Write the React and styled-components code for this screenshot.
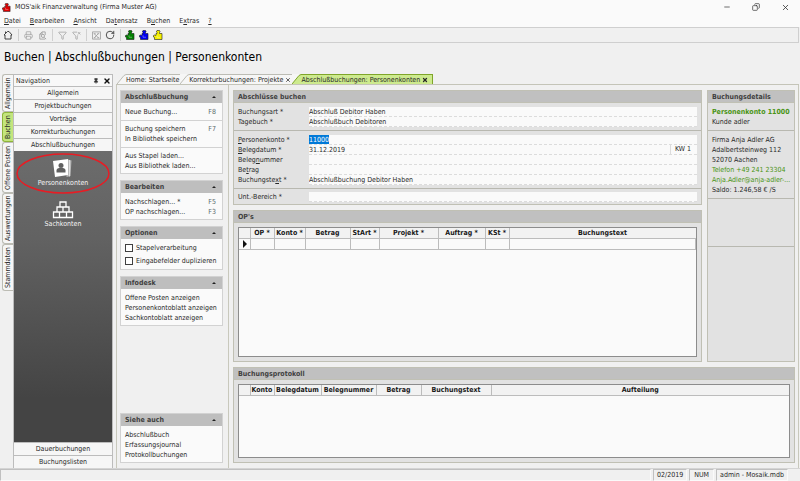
import React from "react";
import styled, { createGlobalStyle } from "styled-components";
import {
  Copy,
  Filter,
  FilterX,
  Minus,
  Pin,
  Printer,
  RotateCw,
  X,
} from "lucide-react";

const GlobalStyle = createGlobalStyle`
  * {
    box-sizing: border-box;
  }
  body {
    margin: 0;
    background: #f0f0f0;
    color: #282828;
    font: 7px/10px "DejaVu Sans Condensed", "DejaVu Sans", sans-serif;
  }
  button, input {
    margin: 0;
    padding: 0;
    border: 0;
    background: none;
    color: inherit;
    font: inherit;
  }
  a {
    color: inherit;
    text-decoration: none;
  }
  svg {
    display: block;
    flex: none;
  }
`;

const Window = styled.div`
  display: flex;
  flex-direction: column;
  min-height: 100vh;
`;

const TitleBar = styled.header`
  display: flex;
  align-items: center;
  gap: 4px;
  height: 14px;
  padding: 0 10px 0 2px;
  background: #fafafa;
`;

const WindowTitle = styled.span`
  flex: 1;
`;

const WindowButtons = styled.div`
  display: flex;
  gap: 21px;
`;

const MenuBar = styled.nav`
  display: flex;
  align-items: center;
  gap: 9px;
  height: 13px;
  padding: 0 4px;
  background: #fafafa;
`;

const ToolBar = styled.div`
  display: flex;
  align-items: center;
  gap: 4px;
  height: 16px;
  padding: 0 3px;
  border: 1px solid #cfcfcf;
  border-left: 0;
  margin-right: 1px;
`;

const ToolButton = styled.button`
  display: flex;
  align-items: center;
  justify-content: center;
  width: 10px;
  height: 12px;
  color: ${(p) => (p.disabled ? "#a0a0a0" : "#303030")};
`;

const ToolSeparator = styled.span`
  width: 1px;
  height: 12px;
  margin-left: 1px;
  background: #d0d0d0;
`;

const Heading = styled.h1`
  margin: 0;
  padding: 6px 4px 9px;
  font-size: 12px;
  line-height: 16px;
  font-weight: normal;
  color: #000;
`;

const Workspace = styled.div`
  display: flex;
  flex: 1;
  padding-right: 1px;
`;

const SideTabs = styled.div`
  display: flex;
  flex-direction: column;
  width: 13px;
  padding-left: 2px;
`;

const SideTab = styled.button`
  writing-mode: vertical-rl;
  transform: rotate(180deg);
  width: 11px;
  height: ${(p) => p.$length}px;
  border: 1px solid ${(p) => (p.$active ? "#8fb53a" : "#bcbcb4")};
  border-left: 0;
  border-radius: 0 3px 3px 0;
  background: ${(p) => (p.$active ? "#c3e57c" : "#f6f6f6")};
  line-height: 9px;
  text-align: center;
  white-space: nowrap;
`;

const Navigation = styled.aside`
  display: flex;
  flex-direction: column;
  width: 100px;
  border: 1px solid #bcbcbc;
  border-bottom: 0;
`;

const NavTitle = styled.div`
  display: flex;
  align-items: center;
  gap: 4px;
  height: 11px;
  padding: 0 1px 0 2px;
  background: #f8f8f8;

  span {
    flex: 1;
  }
`;

const NavGroups = styled.div`
  display: grid;
  grid-auto-rows: 13px;
`;

const NavGroup = styled.button`
  border-top: 1px solid #bcbcbc;
  background: #f6f6f6;
  text-align: center;
`;

const NavBody = styled.div`
  display: flex;
  flex-direction: column;
  flex: 1;
  gap: 2px;
  padding-top: 2px;
  background: linear-gradient(#6c6c6c, #626262 30%, #444 85%);
`;

const NavItem = styled.button`
  position: relative;
  display: flex;
  flex-direction: column;
  align-items: center;
  justify-content: center;
  height: 40px;
  color: #f4f4f4;
`;

const Marker = styled.svg`
  position: absolute;
  top: 0;
  left: 2px;
`;

const Documents = styled.div`
  display: flex;
  flex-direction: column;
  flex: 1;
  min-width: 0;
  margin-left: 3px;
`;

const TabStrip = styled.div`
  display: flex;
  align-items: stretch;
  height: 11px;
  padding-left: 1px;
  border-bottom: 1px solid #c4c4b8;
`;

const TabButton = styled.button`
  display: flex;
  align-items: center;
  gap: 2px;
  padding-right: ${(p) => (p.$active ? 4 : 1)}px;
  border-top: 1px solid ${(p) => (p.$active ? "#7fa52a" : "#bcbcb4")};
  border-right: ${(p) => (p.$active ? "1px solid #7fa52a" : "0")};
  background: ${(p) => (p.$active ? "#cdea8e" : "#f6f6f6")};
  white-space: nowrap;
`;

const Columns = styled.div`
  display: flex;
  flex: 1;
  border: 1px solid #c8c8bc;
  border-top: 0;
  border-bottom: 0;
`;

const TaskPane = styled.aside`
  display: flex;
  flex-direction: column;
  gap: 6px;
  width: 112px;
  padding: 5px 5px 5px 3px;
  border-right: 1px solid #c8c8bc;
`;

const Card = styled.section`
  margin-top: ${(p) => (p.$bottom ? "auto" : "0")};
  border: 1px solid #d2d2d2;
  background: #fafafa;
`;

const CardTitle = styled.h2`
  display: flex;
  align-items: center;
  justify-content: space-between;
  height: 12px;
  margin: 0 0 1px;
  padding: 0 6px 0 4px;
  background: #bebebe;
  color: #404040;
  font-size: 7px;
`;

const CardSection = styled.div`
  padding: ${(p) => (p.$tight ? 1 : 3)}px 4px 3px;
  border-bottom: 1px solid #d2d2d2;

  &:last-child {
    padding-bottom: 2px;
    border-bottom: 0;
  }
`;

const TaskLink = styled.a`
  display: flex;
  justify-content: space-between;
  padding-right: 2px;
  white-space: nowrap;

  kbd {
    font: inherit;
    color: #5c6c6c;
  }
`;

const CheckLabel = styled.label`
  display: flex;
  align-items: center;
  gap: 3px;
  height: 13px;
  white-space: nowrap;
`;

const CheckBox = styled.input`
  appearance: none;
  width: 8px;
  height: 8px;
  border: 1px solid #404040;
  background: #fff;
`;

const Main = styled.main`
  display: grid;
  grid-template-columns: minmax(0, 1fr) 88px;
  grid-template-rows: auto minmax(0, 1fr) 96px;
  gap: 5px;
  flex: 1;
  min-width: 0;
  padding: 5px 3px 5px 4px;
`;

const Panel = styled.section`
  display: flex;
  flex-direction: column;
  grid-column: ${(p) => p.$column || "auto"};
  grid-row: ${(p) => p.$row || "auto"};
  min-width: 0;
  border: 1px solid #c0c0b4;
  background: #e2e2e2;
`;

const PanelTitle = styled.h2`
  height: 12px;
  margin: 0;
  padding: 1px 4px;
  border-bottom: 1px solid #c0c0b4;
  background: #c0c0c0;
  color: #404040;
  font-size: 7px;
`;

const FieldGroup = styled.div`
  padding: 4px 4px 3px;
  border-top: ${(p) => (p.$ruled ? "1px solid #b8b8b0" : "0")};

  &:last-child {
    padding: 3px 4px 2px;
  }
`;

const FieldRow = styled.div`
  display: flex;
  height: 10px;

  label {
    width: 71px;
  }
`;

const FieldBox = styled.div`
  display: flex;
  flex: 1;
  border-bottom: 1px dashed #dcdcdc;
  background: #fafafa;
`;

const FieldInput = styled.input`
  flex: ${(p) => (p.$marked ? "none" : "1")};
  width: ${(p) => (p.$marked ? "20px" : "auto")};
  min-width: 0;
  height: 9px;
  background: ${(p) => (p.$marked ? "#0078d7" : "transparent")};
  color: ${(p) => (p.$marked ? "#fff" : "inherit")};
`;

const Week = styled.span`
  padding: 0 6px 0 4px;
  border-left: 1px solid #dcdcdc;
  line-height: 9px;
`;

const Details = styled.div`
  padding: 4px 4px 3px;
  border-bottom: 1px solid #b8b8b0;
`;

const DetailRow = styled.div`
  height: 10px;
  white-space: nowrap;
`;

const DetailTitle = styled(DetailRow)`
  color: #4a9414;
  font-weight: bold;
`;

const DetailLink = styled.a`
  color: #4a9414;
`;

const DetailGap = styled.div`
  height: 48px;
  border-bottom: 1px solid #b8b8b0;
`;

const TableFrame = styled.div`
  flex: 1;
  margin: 4px;
  border: 1px solid #8c8c8c;
  background: #fafafa;
`;

const Table = styled.table`
  width: 100%;
  table-layout: fixed;
  border-collapse: collapse;

  th,
  td {
    height: 11px;
    padding: 0;
    border-right: 1px solid #bcbcbc;
    border-bottom: 1px solid #bcbcbc;
    white-space: nowrap;
  }
  th {
    height: 10px;
    background: #f2f2f2;
    color: #181818;
  }
  th:last-child {
    border-right: 0;
  }
`;

const Column = styled.col`
  width: ${(p) => (p.$width ? p.$width + "px" : "auto")};
`;

const StatusBar = styled.footer`
  display: flex;
  gap: 2px;
  height: 13px;
  padding-right: 12px;
  border-top: 1px solid #d4d4d4;
`;

const StatusCell = styled.div`
  flex: ${(p) => (p.$grow ? 1 : "none")};
  padding: 0 ${(p) => p.$pad || 3}px;
  border: 1px solid #fafafa;
  border-top-color: #c0c0c0;
  border-left-color: #c0c0c0;
  line-height: 11px;
`;

function PuzzleIcon({ color, size = 10 }) {
  return (
    <svg width={size} height={size} viewBox="0 0 20 20">
      <path
        d="M8 7V5L7 4V2L8 1h5l1 1v2l-1 1v2h5v12H3v-4l-2-1v-3l2-1 3 1V7z"
        fill={color}
        stroke="#1c1c1c"
        strokeWidth="1.2"
      />
      <path d="M8 10.500v4h6" fill="none" stroke="#fff" strokeWidth="1.200" opacity="0.600" />
    </svg>
  );
}

function HomeIcon() {
  return (
    <svg width="10" height="10" viewBox="0 0 20 20" fill="none" stroke="#303030" strokeWidth="1.800">
      <path d="M2 10 9 3h3l6 7h-2v8H4v-8zM5 6V3" />
    </svg>
  );
}

function PreviewIcon() {
  return (
    <svg width="9" height="9" viewBox="0 0 20 20" fill="none" stroke="currentColor" strokeWidth="2">
      <path d="M16 18H4V7l5-5h7v7M4 7h5V2" />
      <circle cx="11" cy="11" r="3.500" />
      <path d="m14 14 4 4" />
    </svg>
  );
}

function ExcelIcon() {
  return (
    <svg width="9" height="9" viewBox="0 0 20 20" fill="none" stroke="currentColor" strokeWidth="2">
      <path d="M1 2h18v16H1zM5 6l9 9M14 6l-9 9M4 6h4M12 6h4M4 15h4M12 15h4" />
    </svg>
  );
}

function ContactsIcon() {
  return (
    <svg width="22" height="20" viewBox="0 0 44 40">
      <path d="m32 3 7 2-2 31-8 2z" fill="#b8b8b8" />
      <path d="M35 4v33" stroke="#eee" strokeWidth="1.500" />
      <path d="M2 6 32 2v32L6 38z" fill="#fff" />
      <circle cx="18" cy="15" r="5" fill="#606060" />
      <path d="M9 29v-4c0-4 3-5 9-5s9 1 9 5v4z" fill="#606060" />
    </svg>
  );
}

function BricksIcon() {
  return (
    <svg width="22" height="18" viewBox="0 0 44 36" fill="none" stroke="#fff" strokeWidth="2.600">
      <path d="M16 2h12v10H16zM10 12h12v10H10zM22 12h12v10H22zM3 22h12v11H3zM15 22h14v11H15zM29 22h12v11H29z" />
    </svg>
  );
}

function Slope({ active, closing }) {
  const stroke = active ? "#7fa52a" : "#bcbcb4";
  const fill = active ? "#cdea8e" : "#f6f6f6";
  return (
    <svg width="9" height="10" viewBox="0 0 9 10">
      {closing && <path d="M0 0h8L1 10H0z" fill="#f6f6f6" />}
      <path d="M0 10 7 1.500 9 .5V10z" fill={fill} />
      <path d="M0 10 7 1.500 9 .5" fill="none" stroke={stroke} />
    </svg>
  );
}

// the letter after "&" is the access key
function AccessText({ text }) {
  const at = text.indexOf("&");
  if (at < 0) return text;
  return (
    <>
      {text.slice(0, at)}
      <u>{text[at + 1]}</u>
      {text.slice(at + 2)}
    </>
  );
}

const menus = ["&Datei", "&Bearbeiten", "&Ansicht", "Da&tensatz", "B&uchen", "E&xtras", "&?"];

const sideTabs = [
  { name: "Allgemein", length: 38 },
  { name: "Buchen", length: 30, active: true },
  { name: "Offene Posten", length: 51 },
  { name: "Auswertungen", length: 51 },
  { name: "Stammdaten", length: 47 },
];

const navGroups = [
  "Allgemein",
  "Projektbuchungen",
  "Vorträge",
  "Korrekturbuchungen",
  "Abschlußbuchungen",
];

const fieldGroups = [
  [
    { id: "art", label: "Buchungsart *", value: "Abschluß Debitor Haben" },
    { id: "tagebuch", label: "Tagebuch *", value: "Abschlußbuch Debitoren" },
  ],
  [
    { id: "konto", label: "&Personenkonto *", value: "11000", marked: true },
    { id: "datum", label: "&Belegdatum *", value: "31.12.2019", week: "KW 1" },
    { id: "nummer", label: "Beleg&nummer", value: "" },
    { id: "betrag", label: "Be&trag", value: "" },
    { id: "text", label: "Buchungste&xt *", value: "Abschlußbuchung Debitor Haben" },
  ],
  [{ id: "bereich", label: "Unt.-Bereich *", value: "" }],
];

const opColumns = [
  ["", 11],
  ["OP *", 24],
  ["Konto *", 31],
  ["Betrag", 45],
  ["StArt *", 29],
  ["Projekt *", 59],
  ["Auftrag *", 47],
  ["KSt *", 24],
  ["Buchungstext"],
];

const protocolColumns = [
  ["", 11],
  ["Konto", 24],
  ["Belegdatum", 47],
  ["Belegnummer", 55],
  ["Betrag", 45],
  ["Buchungstext", 70],
  ["Aufteilung"],
];

function TaskCard({ title, groups, bottom, children }) {
  return (
    <Card $bottom={bottom}>
      <CardTitle>
        {title}
        <svg width="4" height="2" viewBox="0 0 4 2">
          <path d="M0 2 2 0l2 2z" fill="#202020" />
        </svg>
      </CardTitle>
      {groups &&
        groups.map((group, i) => (
          <CardSection key={i}>
            {group.map(([text, hotkey]) => (
              <TaskLink href="#" key={text}>
                {text}
                {hotkey && <kbd>{hotkey}</kbd>}
              </TaskLink>
            ))}
          </CardSection>
        ))}
      {children}
    </Card>
  );
}

function DataTable({ columns, children }) {
  return (
    <TableFrame>
      <Table>
        <colgroup>
          {columns.map(([name, width]) => (
            <Column key={name} $width={width} />
          ))}
        </colgroup>
        <thead>
          <tr>
            {columns.map(([name]) => (
              <th key={name}>{name}</th>
            ))}
          </tr>
        </thead>
        {children}
      </Table>
    </TableFrame>
  );
}

function App() {
  return (
    <Window>
      <GlobalStyle />
      <TitleBar>
        <PuzzleIcon color="#e00000" size={9} />
        <WindowTitle>MOS'aik Finanzverwaltung (Firma Muster AG)</WindowTitle>
        <WindowButtons>
          <button aria-label="Minimieren"><Minus size={8} /></button>
          <button aria-label="Wiederherstellen"><Copy size={8} transform="scale(-1 1)" /></button>
          <button aria-label="Schließen"><X size={9} /></button>
        </WindowButtons>
      </TitleBar>
      <MenuBar>
        {menus.map((menu) => (
          <button key={menu}><AccessText text={menu} /></button>
        ))}
      </MenuBar>
      <ToolBar>
        <ToolButton aria-label="Startseite"><HomeIcon /></ToolButton>
        <ToolSeparator />
        <ToolButton disabled aria-label="Drucken"><Printer size={9} /></ToolButton>
        <ToolButton disabled aria-label="Vorschau"><PreviewIcon /></ToolButton>
        <ToolSeparator />
        <ToolButton disabled aria-label="Filter"><Filter size={9} /></ToolButton>
        <ToolButton disabled aria-label="Filter entfernen"><FilterX size={9} /></ToolButton>
        <ToolSeparator />
        <ToolButton disabled aria-label="Excel"><ExcelIcon /></ToolButton>
        <ToolButton aria-label="Aktualisieren"><RotateCw size={10} /></ToolButton>
        <ToolSeparator />
        <ToolButton aria-label="Baustein grün"><PuzzleIcon color="#008000" /></ToolButton>
        <ToolButton aria-label="Baustein blau"><PuzzleIcon color="#0000f0" /></ToolButton>
        <ToolButton aria-label="Baustein gelb"><PuzzleIcon color="#f4f000" /></ToolButton>
      </ToolBar>
      <Heading>Buchen | Abschlußbuchungen | Personenkonten</Heading>

      <Workspace>
        <SideTabs>
          {sideTabs.map((tab) => (
            <SideTab key={tab.name} $length={tab.length} $active={tab.active}>
              {tab.name}
            </SideTab>
          ))}
        </SideTabs>

        <Navigation>
          <NavTitle>
            <span>Navigation</span>
            <Pin size={6} fill="#303030" />
            <X size={8} strokeWidth={4} color="#101010" />
          </NavTitle>
          <NavGroups>
            {navGroups.map((name) => (
              <NavGroup key={name}>{name}</NavGroup>
            ))}
          </NavGroups>
          <NavBody>
            <NavItem>
              <ContactsIcon />
              Personenkonten
              <Marker width="94" height="41" viewBox="0 0 94 41">
                <ellipse cx="47" cy="20.500" rx="46" ry="19.500" fill="none" stroke="#e81c24" strokeWidth="1.500" />
              </Marker>
            </NavItem>
            <NavItem>
              <BricksIcon />
              Sachkonten
            </NavItem>
          </NavBody>
          <NavGroups>
            <NavGroup>Dauerbuchungen</NavGroup>
            <NavGroup>Buchungslisten</NavGroup>
          </NavGroups>
        </Navigation>

        <Documents>
          <TabStrip>
            <Slope />
            <TabButton>Home: Startseite</TabButton>
            <Slope closing />
            <TabButton>
              Korrekturbuchungen: Projekte
              <X size={6} strokeWidth={4} color="#606060" />
            </TabButton>
            <Slope closing active />
            <TabButton $active>
              Abschlußbuchungen: Personenkonten
              <X size={6} strokeWidth={5} />
            </TabButton>
          </TabStrip>

          <Columns>
            <TaskPane>
              <TaskCard
                title="Abschlußbuchung"
                groups={[
                  [["Neue Buchung...", "F8"]],
                  [["Buchung speichern", "F7"], ["In Bibliothek speichern"]],
                  [["Aus Stapel laden..."], ["Aus Bibliothek laden..."]],
                ]}
              />
              <TaskCard
                title="Bearbeiten"
                groups={[[["Nachschlagen... *", "F5"], ["OP nachschlagen...", "F3"]]]}
              />
              <TaskCard title="Optionen">
                <CardSection $tight>
                  <CheckLabel><CheckBox type="checkbox" />Stapelverarbeitung</CheckLabel>
                  <CheckLabel><CheckBox type="checkbox" />Eingabefelder duplizieren</CheckLabel>
                </CardSection>
              </TaskCard>
              <TaskCard
                title="Infodesk"
                groups={[
                  [["Offene Posten anzeigen"], ["Personenkontoblatt anzeigen"], ["Sachkontoblatt anzeigen"]],
                ]}
              />
              <TaskCard
                bottom
                title="Siehe auch"
                groups={[[["Abschlußbuch"], ["Erfassungsjournal"], ["Protokollbuchungen"]]]}
              />
            </TaskPane>

            <Main>
              <Panel>
                <PanelTitle>Abschlüsse buchen</PanelTitle>
                {fieldGroups.map((group, i) => (
                  <FieldGroup key={i} $ruled={i > 0}>
                    {group.map((field) => (
                      <FieldRow key={field.id}>
                        <label htmlFor={field.id}><AccessText text={field.label} /></label>
                        <FieldBox>
                          <FieldInput id={field.id} defaultValue={field.value} $marked={field.marked} />
                          {field.week && <Week>{field.week}</Week>}
                        </FieldBox>
                      </FieldRow>
                    ))}
                  </FieldGroup>
                ))}
              </Panel>

              <Panel $column="2" $row="1 / 3">
                <PanelTitle>Buchungsdetails</PanelTitle>
                <Details>
                  <DetailTitle>Personenkonto 11000</DetailTitle>
                  <DetailRow>Kunde adler</DetailRow>
                </Details>
                <Details>
                  <DetailRow>Firma Anja Adler AG</DetailRow>
                  <DetailRow>Adalbertsteinweg 112</DetailRow>
                  <DetailRow>52070 Aachen</DetailRow>
                  <DetailRow><DetailLink href="#">Telefon +49 241 23304</DetailLink></DetailRow>
                  <DetailRow><DetailLink href="#">Anja.Adler@anja-adler-...</DetailLink></DetailRow>
                  <DetailRow>Saldo: 1.246,58 € /S</DetailRow>
                </Details>
                <DetailGap />
              </Panel>

              <Panel $column="1" $row="2">
                <PanelTitle>OP's</PanelTitle>
                <DataTable columns={opColumns}>
                  <tbody>
                    <tr>
                      {opColumns.map(([name], i) => (
                        <td key={name}>
                          {i === 0 && (
                            <svg width="10" height="8" viewBox="0 0 10 8">
                              <path d="M4 0v8l4-4z" fill="#101010" />
                            </svg>
                          )}
                        </td>
                      ))}
                    </tr>
                  </tbody>
                </DataTable>
              </Panel>

              <Panel $column="1 / 3" $row="3">
                <PanelTitle>Buchungsprotokoll</PanelTitle>
                <DataTable columns={protocolColumns} />
              </Panel>
            </Main>
          </Columns>
        </Documents>
      </Workspace>

      <StatusBar>
        <StatusCell $grow />
        <StatusCell>02/2019</StatusCell>
        <StatusCell $pad={4}>NUM</StatusCell>
        <StatusCell>admin - Mosaik.mdb</StatusCell>
      </StatusBar>
    </Window>
  );
}

export default App;
